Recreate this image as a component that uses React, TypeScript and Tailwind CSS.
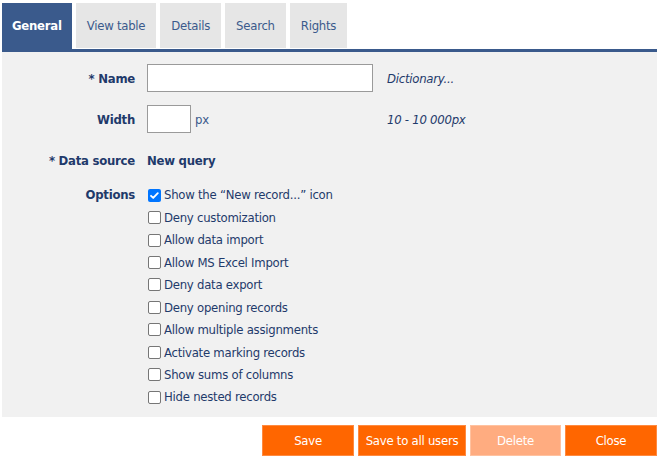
import React from 'react'

const options = [
  { label: 'Show the \u201cNew record...\u201d icon', checked: true },
  { label: 'Deny customization', checked: false },
  { label: 'Allow data import', checked: false },
  { label: 'Allow MS Excel Import', checked: false },
  { label: 'Deny data export', checked: false },
  { label: 'Deny opening records', checked: false },
  { label: 'Allow multiple assignments', checked: false },
  { label: 'Activate marking records', checked: false },
  { label: 'Show sums of columns', checked: false },
  { label: 'Hide nested records', checked: false },
]

const tabs = ['General', 'View table', 'Details', 'Search', 'Rights']

function Checkbox({ checked }: { checked: boolean }) {
  if (checked) {
    return (
      <span className="w-[13px] h-[13px] rounded-[2px] bg-[#0075ff] flex items-center justify-center shrink-0">
        <svg width="11" height="11" viewBox="0 0 12 12" fill="none">
          <path d="M2.2 6.3l2.4 2.4 5-5.2" stroke="white" strokeWidth={2} strokeLinecap="round" strokeLinejoin="round" />
        </svg>
      </span>
    )
  }
  return <span className="w-[13px] h-[13px] rounded-[2px] border border-[#767676] bg-white shrink-0" />
}

export default function App() {
  return (
    <div
      className="w-[661px] h-[460px] bg-white text-[13px] tracking-[-0.25px] text-[#1f3a6b] overflow-hidden"
      style={{ fontFamily: '"DejaVu Sans Condensed", "DejaVu Sans", sans-serif' }}
    >
      <div className="ml-[2px] w-[655px]">
        {/* Tabs */}
        <div className="flex items-end gap-[4px] pt-[3px] h-[49px]">
          {tabs.map((t, i) =>
            i === 0 ? (
              <div key={t} className="h-full px-[10px] flex items-center bg-[#3a5a8c] text-white font-bold">
                {t}
              </div>
            ) : (
              <div key={t} className="h-[45px] px-[11px] flex items-center bg-[#e6e6e6] text-[#3b5a8c] self-start">
                {t}
              </div>
            )
          )}
        </div>
        <div className="h-[3px] bg-[#3a5a8c]" />

        {/* Form panel */}
        <div className="bg-[#f1f1f1] h-[365px] pt-[12px]">
          <div className="flex items-center h-[28px]">
            <div className="w-[133px] text-right font-bold pt-[2px]">* Name</div>
            <div className="ml-[12px] w-[226px]">
              <input className="w-[226px] h-[28px] bg-white border border-[#9a9a9a] outline-none" />
            </div>
            <div className="ml-[14px] italic pt-[2px]">Dictionary...</div>
          </div>

          <div className="flex items-center h-[28px] mt-[13px]">
            <div className="w-[133px] text-right font-bold pt-[2px]">Width</div>
            <div className="ml-[12px] w-[226px] flex items-center">
              <input className="w-[44px] h-[28px] bg-white border border-[#9a9a9a] outline-none" />
              <span className="ml-[4px] text-[#3b5a8c] pt-[2px]">px</span>
            </div>
            <div className="ml-[14px] italic pt-[2px]">10 - 10 000px</div>
          </div>

          <div className="flex items-center h-[26px] mt-[14px]">
            <div className="w-[133px] text-right font-bold pt-[2px]">* Data source</div>
            <div className="ml-[12px] font-bold pt-[2px]">New query</div>
          </div>

          <div className="flex mt-[11px]">
            <div className="w-[133px] text-right font-bold leading-[22.5px]">Options</div>
            <div className="ml-[13px] flex flex-col">
              {options.map((o) => (
                <div key={o.label} className="flex items-center gap-[3px] h-[22.45px]">
                  <Checkbox checked={o.checked} />
                  <span>{o.label}</span>
                </div>
              ))}
            </div>
          </div>
        </div>

        {/* Buttons */}
        <div className="flex justify-end gap-[4px] mt-[8px]">
          <button className="w-[92px] h-[31px] bg-[#ff6600] border border-[#ff8a40] text-white">Save</button>
          <button className="w-[108px] h-[31px] bg-[#ff6600] border border-[#ff8a40] text-white">Save to all users</button>
          <button className="w-[91px] h-[31px] bg-[#ffac80] border border-[#ffc2a0] text-white">Delete</button>
          <button className="w-[92px] h-[31px] bg-[#ff6600] border border-[#ff8a40] text-white">Close</button>
        </div>
      </div>
    </div>
  )
}
